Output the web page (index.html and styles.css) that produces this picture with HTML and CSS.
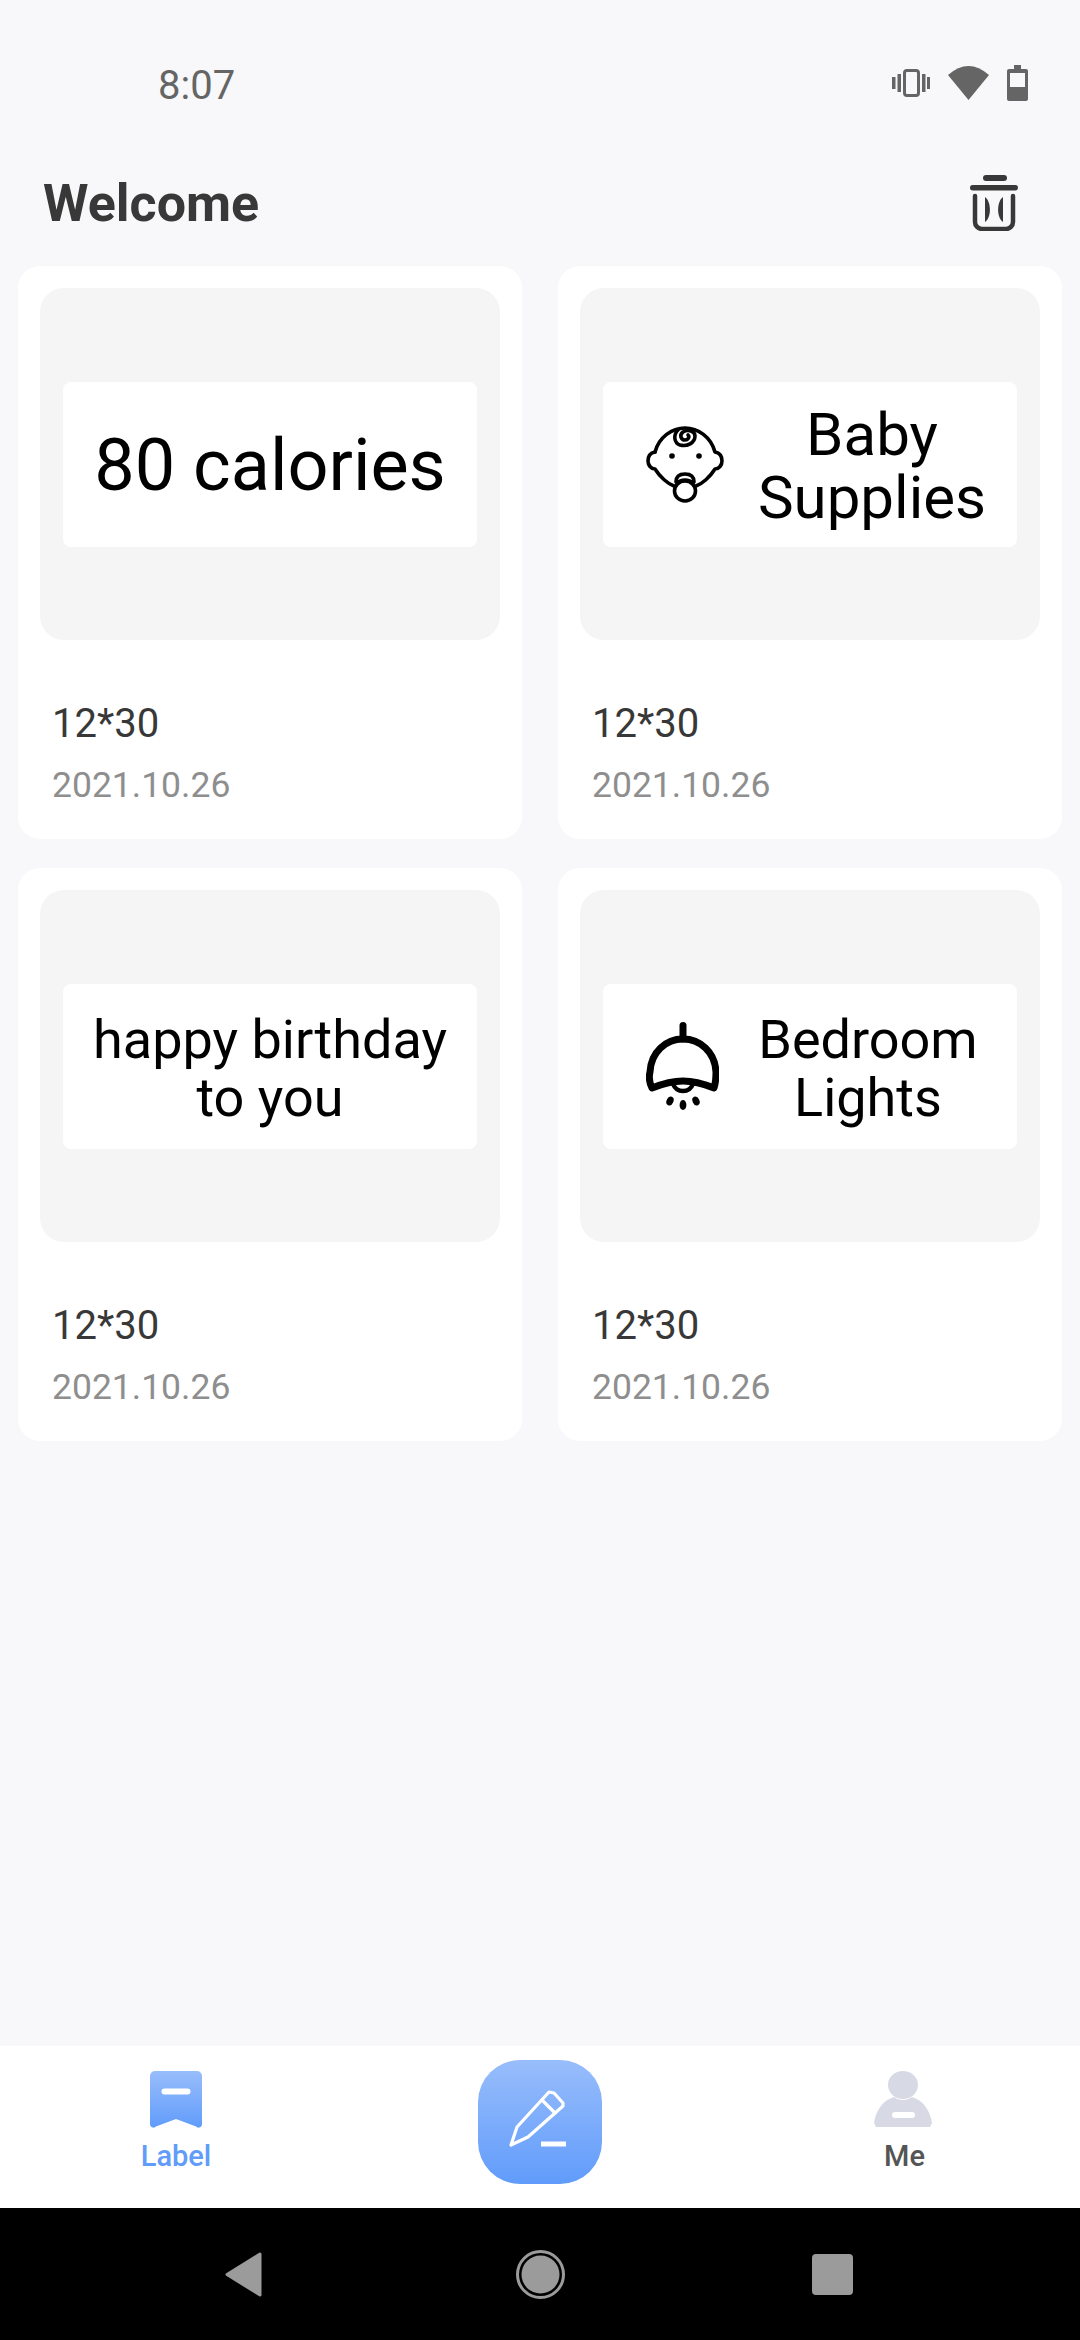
FILE: index.html
```html
<!DOCTYPE html>
<html lang="en">
    <head>
        <meta charset="UTF-8" />
        <meta name="viewport" content="width=device-width, initial-scale=1.0" />
        <title>Label</title>
        <link rel="stylesheet" href="styles.css">
    </head>
    <body>
        <div class="screen">
            <!-- Status bar -->
            <div class="status-bar">
                <span class="status-time">8:07</span>
                <div class="status-icons">
                    <svg class="icon-vibrate" width="38" height="28" viewBox="0 0 38 28">
                        <rect x="12.5" y="1.5" width="14" height="25" rx="2.5" fill="none" stroke="#656565" stroke-width="3"/>
                        <rect x="0" y="8" width="3.5" height="12" fill="#656565"/>
                        <rect x="5.5" y="5" width="3.5" height="18" fill="#656565"/>
                        <rect x="30" y="5" width="3.5" height="18" fill="#656565"/>
                        <rect x="35" y="8" width="3" height="12" fill="#656565"/>
                    </svg>
                    <svg class="icon-wifi" width="41" height="34" viewBox="0 0 41 34">
                        <path d="M0 9 Q20.5 -9 41 9 L20.5 34 Z" fill="#656565"/>
                    </svg>
                    <svg class="icon-battery" width="21" height="36" viewBox="0 0 21 36">
                        <path d="M7 0 H14 V4 H19 a2 2 0 0 1 2 2 V34 a2 2 0 0 1 -2 2 H2 a2 2 0 0 1 -2 -2 V6 a2 2 0 0 1 2 -2 H7 Z" fill="#656565"/>
                        <rect x="3" y="8" width="15" height="14" fill="#f8f8fa"/>
                    </svg>
                </div>
            </div>

            <!-- Header -->
            <div class="header">
                <h1>Welcome</h1>
                <svg width="48" height="56" viewBox="0 0 48 56">
                    <rect x="13" y="0" width="24" height="6" rx="3" fill="#383838"/>
                    <rect x="0" y="10" width="48" height="5.5" rx="2.7" fill="#383838"/>
                    <path d="M5 21 V47 a7 7 0 0 0 7 7 H36 a7 7 0 0 0 7 -7 V21" fill="none" stroke="#383838" stroke-width="4.5" stroke-linecap="round"/>
                    <path d="M15 22 C21 26 22 42 15 47 Z" fill="#383838"/>
                    <path d="M33 22 C27 26 26 42 33 47 Z" fill="#383838"/>
                </svg>
            </div>

            <!-- Label list -->
            <div class="card-grid">
                <div class="card">
                    <div class="card-thumb">
                        <div class="label-preview">
                            <div class="label-text size-calories">80 calories</div>
                        </div>
                    </div>
                    <div class="card-name">12*30</div>
                    <div class="card-date">2021.10.26</div>
                </div>

                <div class="card">
                    <div class="card-thumb">
                        <div class="label-preview">
                            <svg class="label-icon" width="78" height="77" viewBox="0 0 78 77" fill="none" stroke="#000" stroke-width="3.6" stroke-linecap="round" stroke-linejoin="round">
                                <path d="M9 26 C13 11 26 2 39 2 C52 2 65 11 69 26 C74 27 76 31 76 35 C76 39 73 43 69 43 C64 51 56 58 50 60"/>
                                <path d="M28 60 C22 58 14 51 9 43 C5 43 2 39 2 35 C2 31 4 27 9 26"/>
                                <path d="M32 4 C27 9 28 17 34 19 C41 21 49 17 49 10 C49 5 42 3 37 6 C33 9 35 14 39 14 C42 14 44 11 42 9"/>
                                <path d="M30 56 C30 50 34 48 39 48 C44 48 48 50 48 56"/>
                                <path d="M31 57 C35 53 43 53 47 57"/>
                                <ellipse cx="39" cy="65" rx="10.5" ry="10"/>
                                <circle cx="26" cy="30" r="2.8" fill="#000" stroke="none"/>
                                <circle cx="53" cy="30" r="2.8" fill="#000" stroke="none"/>
                            </svg>
                            <div class="label-text size-baby">Baby<br>Supplies</div>
                        </div>
                    </div>
                    <div class="card-name">12*30</div>
                    <div class="card-date">2021.10.26</div>
                </div>

                <div class="card">
                    <div class="card-thumb">
                        <div class="label-preview">
                            <div class="label-text size-small">happy birthday<br>to you</div>
                        </div>
                    </div>
                    <div class="card-name">12*30</div>
                    <div class="card-date">2021.10.26</div>
                </div>

                <div class="card">
                    <div class="card-thumb">
                        <div class="label-preview">
                            <svg class="label-icon" width="73" height="89" viewBox="0 0 73 89" fill="none" stroke="#000" stroke-width="7" stroke-linecap="round" stroke-linejoin="round">
                                <path d="M37 3.5 V17"/>
                                <path d="M6 66 C3 60 3 54 4 50 C5 30 20 17 37 17 C54 17 69 30 70 50 C70 54 70 60 68 66 C58 62 48 59 37 59 C26 59 16 62 6 66 Z"/>
                                <path d="M27 62 C29 67 33 69 37 69 C41 69 45 67 47 62" stroke-width="4.5"/>
                                <ellipse cx="24" cy="79" rx="3.4" ry="4.6" fill="#000" stroke="none" transform="rotate(25 24 79)"/>
                                <ellipse cx="37" cy="83" rx="3.4" ry="5" fill="#000" stroke="none"/>
                                <ellipse cx="50" cy="79" rx="3.4" ry="4.6" fill="#000" stroke="none" transform="rotate(-25 50 79)"/>
                            </svg>
                            <div class="label-text size-small">Bedroom<br>Lights</div>
                        </div>
                    </div>
                    <div class="card-name">12*30</div>
                    <div class="card-date">2021.10.26</div>
                </div>
            </div>

            <!-- Bottom tabs -->
            <div class="tab-bar">
                <div class="tab tab-active">
                    <svg width="52" height="58" viewBox="0 0 52 58">
                        <defs>
                            <linearGradient id="tabBlue" x1="0" y1="0" x2="0" y2="1">
                                <stop offset="0" stop-color="#98bdfb"/>
                                <stop offset="1" stop-color="#619cfb"/>
                            </linearGradient>
                        </defs>
                        <path d="M5 0 H47 a5 5 0 0 1 5 5 V53 a3.5 3.5 0 0 1 -6 2.6 L26 48 L6 55.6 a3.5 3.5 0 0 1 -6 -2.6 V5 a5 5 0 0 1 5 -5 Z" fill="url(#tabBlue)"/>
                        <rect x="11.5" y="17.5" width="29" height="6" rx="3" fill="#fff"/>
                    </svg>
                    <span>Label</span>
                </div>
                <div class="edit-button">
                    <svg width="124" height="124" viewBox="0 0 124 124" fill="none" stroke="#fff" stroke-width="3.2" stroke-linecap="round" stroke-linejoin="round">
                        <path d="M33 85 L39 67 L71 32 L76 33 L85 43 L85 46 L50 77 Z"/>
                        <path d="M64 40 L77 53"/>
                        <path d="M63 84 H88" stroke-width="5" stroke-linecap="butt"/>
                    </svg>
                </div>
                <div class="tab tab-me">
                    <svg width="58" height="56" viewBox="0 0 58 56">
                        <ellipse cx="29" cy="14" rx="15" ry="14" fill="#d7dae5"/>
                        <path d="M0 52 C2 38 10 29 20 26 C25 30 33 30 38 26 C48 29 56 38 58 52 L56 56 H2 Z" fill="#d7dae5"/>
                        <rect x="18" y="41" width="23" height="6" rx="3" fill="#fff"/>
                    </svg>
                    <span>Me</span>
                </div>
            </div>

            <!-- System navigation -->
            <div class="nav-bar">
                <svg width="39" height="45" viewBox="0 0 39 45">
                    <path d="M36 2 L3 22.5 L36 43 Z" fill="#9b9b9b" stroke="#9b9b9b" stroke-width="3" stroke-linejoin="round"/>
                </svg>
                <svg class="nav-home" width="49" height="49" viewBox="0 0 49 49">
                    <circle cx="24.5" cy="24.5" r="23" fill="none" stroke="#9b9b9b" stroke-width="3"/>
                    <circle cx="24.5" cy="24.5" r="19" fill="#9b9b9b"/>
                </svg>
                <div class="nav-recent"></div>
            </div>
        </div>
    </body>
</html>
```

FILE: styles.css
```css
body {
    font-family: Roboto, "Liberation Sans", sans-serif;
    margin: 0;
    background-color: #f8f8fa;
}
.screen {
    display: flex;
    flex-direction: column;
    height: 2340px;
}
.status-bar {
    display: flex;
    align-items: center;
    justify-content: space-between;
    flex-shrink: 0;
    height: 166px;
    padding: 0 52px 0 158px;
}
.status-time {
    padding-top: 4px;
    font-size: 40px;
    color: #656565;
}
.status-icons {
    display: flex;
    align-items: center;
    gap: 18px;
}
.header {
    display: flex;
    align-items: center;
    justify-content: space-between;
    height: 72px;
    margin-top: 1px;
    margin-bottom: 27px;
    padding: 0 62px 0 43px;
}
h1 {
    margin: 0;
    font-size: 52px;
    font-weight: 700;
    color: #383838;
}
.card-grid {
    display: grid;
    grid-template-columns: 504px 504px;
    gap: 29px 36px;
    padding: 0 18px;
}
.card {
    height: 573px;
    box-sizing: border-box;
    padding: 22px;
    background: white;
    border-radius: 22px;
}
.card-thumb {
    display: flex;
    align-items: center;
    height: 352px;
    padding: 0 23px;
    background-color: #f5f5f5;
    border-radius: 24px;
}
.label-preview {
    display: flex;
    align-items: center;
    flex: 1;
    height: 165px;
    background: white;
    border-radius: 8px;
}
.label-icon {
    flex-shrink: 0;
    margin-left: 43px;
}
.label-text {
    flex: 1;
    text-align: center;
    color: black;
}
.size-calories {
    font-size: 72px;
    padding-top: 2px;
}
.size-baby {
    font-size: 60px;
    line-height: 63px;
    padding: 4px 0 0 3px;
}
.size-small {
    font-size: 54px;
    line-height: 58px;
    padding-top: 6px;
}
.card-name {
    margin: 60px 0 0 12px;
    font-size: 40px;
    line-height: 48px;
    color: #383838;
}
.card-date {
    margin: 13px 0 0 12px;
    font-size: 35.5px;
    line-height: 48px;
    color: #8e8e8e;
}
.tab-bar {
    display: flex;
    align-items: center;
    justify-content: space-between;
    height: 162px;
    margin-top: auto;
    padding: 0 117px 0 116px;
    background: white;
}
.tab {
    display: flex;
    flex-direction: column;
    align-items: center;
    width: 120px;
    height: 112px;
    font-size: 29px;
    font-weight: 500;
    color: #555;
}
.tab span {
    margin-top: 10px;
}
.tab-active {
    color: #619cfb;
}
.tab-me span {
    margin-top: 12px;
    margin-left: 3px;
}
.edit-button {
    align-self: flex-start;
    width: 124px;
    height: 124px;
    margin-top: 14px;
    border-radius: 42px;
    background: linear-gradient(#98bdfb, #619cfb);
}
.nav-bar {
    display: flex;
    align-items: center;
    justify-content: space-between;
    height: 132px;
    padding: 0 227px 0 224px;
    background: black;
}
.nav-home {
    margin-left: 6px;
}
.nav-recent {
    width: 41px;
    height: 41px;
    background-color: #9b9b9b;
    border-radius: 4px;
}
```
